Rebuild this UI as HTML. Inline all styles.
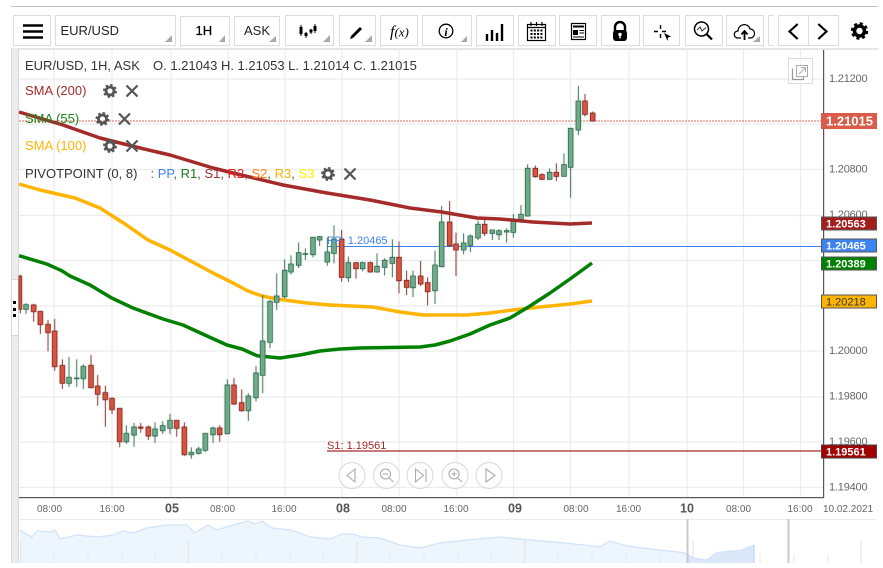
<!DOCTYPE html>
<html><head><meta charset="utf-8"><style>
html,body{margin:0;padding:0;background:#fff;width:883px;height:568px;overflow:hidden}
svg{display:block;font-family:"Liberation Sans",sans-serif}
.btn{fill:#fff;stroke:#dcdcdc;stroke-width:1}
.tri{fill:#a9a9a9}
.ax{font-size:11px;fill:#666;letter-spacing:-.2px}
.t{font-size:10px;fill:#666;text-anchor:middle}
.d{font-size:12.500px;font-weight:bold;fill:#555;text-anchor:middle}
.lg{font-size:13px}
.tag{font-size:11px;font-weight:bold;fill:#fff}
.gw{fill:none;stroke:#2b6d4a;stroke-width:2.600}
.rw{fill:none;stroke:#84261e;stroke-width:2.600}
.gb{fill:#6fab8a;stroke:#2b6d4a;stroke-width:2.400}
.rb{fill:#d9543f;stroke:#84261e;stroke-width:2.400}
.ma{fill:none;stroke-width:3.500;stroke-linejoin:round;stroke-linecap:butt}
</style></head><body>
<svg width="883" height="568" viewBox="0 0 883 568" xmlns="http://www.w3.org/2000/svg">
<defs>
<g id="gear" fill="none" stroke="#555"><circle r="4" stroke-width="2.800"/><circle r="6" stroke-width="2" stroke-dasharray="2.400 2.310"/></g>
<g id="x" fill="none" stroke="#555" stroke-width="2.200"><path d="M-5.500-5.500L5.500 5.500M5.500-5.500L-5.500 5.500"/></g>
</defs>

<!-- page frame -->
<rect x="11" y="6" width="867" height="1" fill="#c4c4c4"/>
<rect x="11" y="48" width="867" height="2" fill="#e6e6e6"/>
<rect x="11" y="49" width="8" height="514" fill="#ececec"/>
<rect x="11" y="49" width="1" height="514" fill="#d8d8d8"/>
<rect x="18" y="49" width="1" height="514" fill="#d8d8d8"/>
<rect x="12" y="279" width="6" height="56" fill="#fff"/>
<rect x="11" y="279" width="8" height="1" fill="#d8d8d8"/><rect x="11" y="335" width="8" height="1" fill="#d8d8d8"/>
<rect x="13" y="301" width="3" height="3" fill="#000"/><rect x="13" y="308" width="3" height="3" fill="#000"/><rect x="13" y="314" width="3" height="3" fill="#000"/>

<!-- toolbar -->
<rect class="btn" x="13.500" y="15.500" width="37" height="30"/>
<rect class="btn" x="55.500" y="15.500" width="120" height="30"/>
<rect class="btn" x="180.500" y="16.500" width="49" height="29"/>
<rect class="btn" x="234.500" y="16.500" width="45" height="29"/>
<rect class="btn" x="285.500" y="15.500" width="48" height="30"/>
<rect class="btn" x="339.500" y="15.500" width="36" height="30"/>
<rect class="btn" x="380.500" y="15.500" width="37" height="30"/>
<rect class="btn" x="422.500" y="15.500" width="49" height="30"/>
<rect class="btn" x="476.500" y="15.500" width="37" height="30"/>
<rect class="btn" x="518.500" y="15.500" width="37" height="30"/>
<rect class="btn" x="559.500" y="15.500" width="37" height="30"/>
<rect class="btn" x="601.500" y="15.500" width="38" height="30"/>
<rect class="btn" x="643.500" y="15.500" width="36" height="30"/>
<rect class="btn" x="685.500" y="15.500" width="37" height="30"/>
<rect class="btn" x="726.500" y="15.500" width="37" height="30"/>
<path d="M774 15.500H768.500V45.500H774" fill="none" stroke="#dcdcdc"/>
<rect class="btn" x="778.500" y="15.500" width="30" height="30"/>
<rect class="btn" x="808.500" y="15.500" width="30" height="30"/>
<path class="tri" d="M172 35V42H165zM225 35V42H219zM276 36V42H269zM330 35V42H323zM372 35V42H365zM467 36V42H461zM760 36V42H753z"/>
<path d="M23 25.500H43M23 31.500H43M23 37.500H43" stroke="#000" stroke-width="2.600" fill="none"/>
<text x="60.500" y="35" font-size="13" fill="#222">EUR/USD</text>
<text x="195.500" y="35" font-size="13" fill="#000" stroke="#000" stroke-width=".25">1H</text>
<text x="244" y="35" font-size="13" fill="#222">ASK</text>
<path d="M301 25V36M306 32V38M311 29V34M315 24V33" stroke="#000" stroke-width="1" fill="none"/>
<path d="M299.500 27h3v7h-3zM304.500 33h3v3h-3zM309.500 29.500h3v3h-3zM313.500 26h3v5h-3z" fill="#000"/>
<path d="M352 37L361 28" stroke="#000" stroke-width="3" fill="none"/><path d="M350 39l1-3 2 2z" fill="#000"/>
<text x="390" y="36.500" font-size="16" font-family="Liberation Serif" font-style="italic" fill="#000">f<tspan font-size="13">(x)</tspan></text>
<circle cx="446" cy="31" r="6.800" fill="none" stroke="#000" stroke-width="1.300"/>
<text x="446" y="36" font-size="12" font-family="Liberation Serif" font-style="italic" font-weight="bold" text-anchor="middle" fill="#000">i</text>
<path d="M487 41V34M492 41V30M497 41V33M502 41V24" stroke="#000" stroke-width="2.400" fill="none"/>
<rect x="527.500" y="24.500" width="18" height="16" fill="none" stroke="#000" stroke-width="1.200"/>
<path d="M527 27.500H546M531 22V26M536.500 22V26M542 22V26" stroke="#000" stroke-width="1.200" fill="none"/>
<path d="M530.500 30.500h12M530.500 34h12M530.500 37.500h12" stroke="#000" stroke-width="2" stroke-dasharray="2 1.300" fill="none"/>
<rect x="571.500" y="23.500" width="14" height="16" fill="none" stroke="#000" stroke-width="1.200"/>
<path d="M573 26.500H584" stroke="#000" stroke-width="2"/>
<rect x="573" y="30" width="5" height="5" fill="#000"/>
<path d="M579.500 30.500H584M579.500 33H584M573 37H584" stroke="#000"/>
<path d="M615 31V27a5 5 0 0 1 10 0V31" fill="none" stroke="#000" stroke-width="2.400"/>
<rect x="613" y="30" width="14" height="11" rx="3" fill="#000"/><circle cx="620" cy="34.500" r="1.700" fill="#fff"/><rect x="619.300" y="35" width="1.400" height="3.500" fill="#fff"/>
<path d="M654 31.500H658M662 31.500H666M660.500 25V29M660.500 34V38" stroke="#000" stroke-width="1.400" fill="none"/>
<path d="M664 33L671 36.500 668 37.500 667.500 41z" fill="#000"/>
<circle cx="701.500" cy="29" r="7" fill="none" stroke="#000" stroke-width="1.500"/>
<path d="M706.500 34L712 39.500" stroke="#000" stroke-width="2.200" fill="none"/>
<path d="M697 30L700 27 702 31 706 27.500" stroke="#333" stroke-width="1" fill="none"/>
<path d="M741 38H738C733 38 733 31 738 31C738 24 748 22 750 29C756 29 756 38 750 38H748" fill="none" stroke="#000" stroke-width="1.200"/>
<path d="M744.500 40V32M741.500 34.500L744.500 31 747.500 34.500" fill="none" stroke="#000" stroke-width="1.800"/>
<path d="M797.700 24L789.500 31.500 797.700 39M818.300 24L826.500 31.500 818.300 39" fill="none" stroke="#000" stroke-width="2.200"/>
<g transform="translate(859.500 31)" fill="none" stroke="#000"><circle r="5" stroke-width="3.600"/><circle r="7.300" stroke-width="2.800" stroke-dasharray="3 2.730"/></g>

<!-- grid -->
<g stroke="#ececec" stroke-width="1.200" fill="none">
<path d="M54 50V497M112 50V497M171 50V497M228 50V497M285 50V497M342 50V497M399 50V497M457 50V497M513.500 50V497M570.500 50V497M629 50V497M687 50V497M743.500 50V497M800.500 50V497"/>
<path d="M19 79H823M19 124H823M19 169.500H823M19 215.500H823M19 260.500H823M19 306H823M19 351H823M19 397H823M19 442H823M19 487.500H823"/>
</g>

<!-- price lines -->
<path d="M19 121H823" stroke="#e26a60" stroke-width="1" stroke-dasharray="2 1"/>
<path d="M327 246.500H823" stroke="#3d84f0" stroke-width="1.100"/>
<path d="M327 451H823" stroke="#a52a2a" stroke-width="1.300"/>

<!-- moving averages under candles -->
<path class="ma" stroke="#ffb400" d="M19 184L40 190 75 198 100 208 125 224 148 240 170 250 213 273 233 283 248 291 262 296 277 299 307 303 330 305 373 307 400 312 423 315 467 315 490 313 513 310 540 307 570 304 592 301"/>
<path class="ma" stroke="#008000" d="M19 255.700L46.700 264 61.700 270.700 70 276 90 285 100 291 111.700 298 133 308 163 319 183 325 207 336 227 345 242 349 257 355.700 280 358 300 355 320 351 340 349 360 348 420 347 435 345 450 341 470 334 490 325 510 318 530 306 550 293 570 279 592 263"/>

<!-- candles -->
<g style="filter:drop-shadow(0 0 1px rgba(120,120,120,.3))">
<g transform="matrix(.33333 0 0 .33333 0 240)">
<path class="gw" d="M78 190V222M207 351V441M230 358V441M250 373V447M379 556V612M402 549V620M465 547V609M488 544V582M510 522V582M574 622V656M596 620V644M616 580V636M639 560V609M682 418V583M745 460V543M768 378V484M788 165V460M810 180V325M830 100V210"/>
<path class="rw" d="M61 105V220M101 192V245M121 212V282M144 240V334M164 237V392M187 358V447M273 345V445M293 405V497M316 437V560M336 472V522M359 505V622M422 549V578M445 557V600M530 540V590M553 547V648M659 556V605M702 414V495M725 448V515"/>
<path class="gb" d="M71 194h14V208h-14zM200 412h14V430h-14zM223 414h14V416h-14zM243 379h14V416h-14zM372 580h14V605h-14zM395 561h14V585h-14zM458 567h14V588h-14zM481 557h14V572h-14zM503 541h14V565h-14zM567 637h14V644h-14zM589 627h14V640h-14zM609 580h14V631h-14zM632 564h14V584h-14zM675 435h14V581h-14zM738 468h14V512h-14zM761 399h14V473h-14zM781 303h14V406h-14zM803 184h14V307h-14zM823 168h14V187h-14z"/>
<path class="rb" d="M57 108h8V208h-8zM94 195h14V215h-14zM114 214h14V254h-14zM137 253h14V278h-14zM157 273h14V380h-14zM180 376h14V430h-14zM266 376h14V443h-14zM286 438h14V463h-14zM309 458h14V479h-14zM329 475h14V509h-14zM352 505h14V605h-14zM415 561h14V565h-14zM438 561h14V588h-14zM523 541h14V565h-14zM546 561h14V644h-14zM652 564h14V584h-14zM695 435h14V492h-14zM718 488h14V512h-14z"/>
</g>
<g transform="matrix(.33333 0 0 .33333 260 200)">
<path class="gw" d="M74 178V295M93 166V224M116 127V204M136 145V180M159 112V172M179 108V138M202 112V197M222 76V190M265 170V246M308 185V214M351 160V218M374 175V226M397 118V232M459 212V291M525 152V312M545 18V200M611 100V163M631 103V156M654 62V120M697 90V120M717 88V120M740 85V128M760 42V113"/>
<path class="rw" d="M245 90V245M288 188V236M331 185V218M417 124V280M440 212V285M482 183V258M503 232V316M569 3V140M588 98V228M674 60V108"/>
<path class="gb" d="M67 211h14V290h-14zM86 192h14V216h-14zM109 158h14V196h-14zM129 161h14V163h-14zM152 112h14V164h-14zM172 110h14V120h-14zM195 156h14V186h-14zM215 118h14V160h-14zM258 188h14V233h-14zM301 188h14V206h-14zM344 199h14V216h-14zM367 181h14V202h-14zM390 172h14V190h-14zM452 228h14V263h-14zM518 195h14V272h-14zM538 66h14V200h-14zM604 129h14V150h-14zM624 108h14V136h-14zM647 73h14V114h-14zM690 90h14V100h-14zM710 92h14V104h-14zM733 92h14V96h-14zM753 57h14V97h-14z"/>
<path class="rb" d="M238 118h14V232h-14zM281 188h14V206h-14zM324 188h14V216h-14zM410 172h14V242h-14zM433 241h14V262h-14zM475 228h14V252h-14zM496 248h14V275h-14zM562 66h14V137h-14zM581 132h14V150h-14zM667 73h14V100h-14z"/>
</g>
<g transform="matrix(.33333 0 0 .33333 500 70)">
<path class="gw" d="M63 405V458M83 283V440M149 295V330M192 250V320M212 175V383M235 48V195"/>
<path class="rw" d="M106 287V323M126 310V330M169 280V333M255 72V140M278 125V155"/>
<path class="gb" d="M56 433h14V448h-14zM76 295h14V438h-14zM142 307h14V328h-14zM185 284h14V319h-14zM205 175h14V292h-14zM228 93h14V180h-14z"/>
<path class="rb" d="M99 295h14V320h-14zM119 314h14V328h-14zM162 307h14V319h-14zM248 93h14V133h-14zM271 129h14V153h-14z"/>
</g>
</g>
<path class="ma" stroke="#a52a2a" d="M19 112L63 125 100 138 140 148 170 155 213 168 233 173 283 185 327 193 370 200 410 208 441.700 212 477 218 500 219 533 222 570 224 592 223"/>

<!-- chart labels -->
<text x="327" y="244" font-size="11" fill="#3d84f0">PP: 1.20465</text>
<text x="327" y="449" font-size="11" fill="#a52a2a">S1: 1.19561</text>

<!-- legend -->
<text class="lg" x="25" y="70" fill="#333">EUR/USD, 1H, ASK</text>
<text class="lg" x="153" y="70" fill="#333">O. 1.21043 H. 1.21053 L. 1.21014 C. 1.21015</text>
<text class="lg" x="25" y="95" fill="#a52a2a">SMA (200)</text>
<text class="lg" x="25" y="123" fill="#1c8a1c">SMA (55)</text>
<text class="lg" x="25" y="150" fill="#ffb400">SMA (100)</text>
<text class="lg" x="25" y="178" fill="#333">PIVOTPOINT (0, 8)</text>
<text class="lg" x="150.500" y="178" fill="#555">: <tspan fill="#3d84f0">PP</tspan>, <tspan fill="#1c7a1c">R1</tspan>, <tspan fill="#a52a2a">S1</tspan>, <tspan fill="#ee1c1c">R2</tspan>, <tspan fill="#ff7f0e">S2</tspan>, <tspan fill="#ffb400">R3</tspan>, <tspan fill="#ffee00">S3</tspan></text>
<use href="#gear" x="110" y="91"/><use href="#x" x="132" y="91"/>
<use href="#gear" x="102.500" y="119"/><use href="#x" x="124.500" y="119"/>
<use href="#gear" x="110" y="146"/><use href="#x" x="132" y="146"/>
<use href="#gear" x="328" y="174"/><use href="#x" x="350" y="174"/>

<!-- expand icon -->
<rect x="788.500" y="58.500" width="24" height="25" fill="#fff" fill-opacity=".6" stroke="#dcdcdc"/>
<path d="M792.500 68.500V79.500H803.500V75" fill="none" stroke="#999" stroke-width="1.200"/>
<rect x="796.500" y="65.500" width="11" height="11" fill="#fff" stroke="#aaa"/>
<path d="M799 74L805 68M801 67.500H805.500V72" fill="none" stroke="#aaa"/>

<!-- axes -->
<rect x="823" y="50" width="1.200" height="448" fill="#555"/>
<rect x="19" y="497" width="805" height="1.200" fill="#555"/>
<text class="ax" x="829" y="82">1.21200</text>
<text class="ax" x="829" y="172.500">1.20800</text>
<text class="ax" x="829" y="218">1.20600</text>
<text class="ax" x="829" y="354">1.20000</text>
<text class="ax" x="829" y="399.500">1.19800</text>
<text class="ax" x="829" y="445">1.19600</text>
<text class="ax" x="829" y="490.500">1.19400</text>
<rect x="821" y="113" width="56" height="16" fill="#d95c4b"/>
<text x="826" y="125.500" font-size="13" font-weight="bold" fill="#fff">1.21015</text>
<rect x="821.500" y="217" width="55" height="13" fill="#a31d1d" stroke="#555"/><text class="tag" x="826" y="227.500">1.20563</text>
<rect x="821.500" y="239" width="55" height="13" fill="#3d84f0" stroke="#555"/><text class="tag" x="826" y="249.500">1.20465</text>
<rect x="821.500" y="257" width="55" height="13" fill="#008000" stroke="#555"/><text class="tag" x="826" y="267.500">1.20389</text>
<rect x="821.500" y="295" width="55" height="13" fill="#ffb400" stroke="#555"/><text x="826" y="305.500" font-size="11" fill="#333">1.20218</text>
<rect x="821.500" y="445" width="55" height="13" fill="#a00000" stroke="#444"/><text class="tag" x="826" y="455.500">1.19561</text>

<!-- nav buttons -->
<g fill="#fff" fill-opacity=".7" stroke="#ddd" stroke-width="1.200">
<circle cx="352" cy="475.500" r="13"/><circle cx="386.500" cy="475.500" r="13"/><circle cx="420" cy="475.500" r="13"/><circle cx="455" cy="475.500" r="13"/><circle cx="489" cy="475.500" r="13"/>
</g>
<g fill="none" stroke="#aaa" stroke-width="1.100">
<path d="M355 469V482L347 475.500Z"/>
<circle cx="385.500" cy="474" r="5"/><path d="M389 478L393.500 482M383 474H388"/>
<path d="M415.500 469V482L423.500 475.500ZM426 469V482" />
<circle cx="454" cy="474" r="5"/><path d="M457.500 478L462 482M451.500 474H456.500M454 471.500V476.500"/>
<path d="M486 469V482L495 475.500Z"/>
</g>

<!-- time axis -->
<text class="t" x="49.500" y="512">08:00</text>
<text class="t" x="112" y="512">16:00</text>
<text class="d" x="172" y="512.500">05</text>
<text class="t" x="222.500" y="512">08:00</text>
<text class="t" x="284" y="512">16:00</text>
<text class="d" x="343" y="512.500">08</text>
<text class="t" x="394" y="512">08:00</text>
<text class="t" x="456" y="512">16:00</text>
<text class="d" x="515" y="512.500">09</text>
<text class="t" x="576" y="512">08:00</text>
<text class="t" x="628.500" y="512">16:00</text>
<text class="d" x="687" y="512.500">10</text>
<text class="t" x="738.500" y="512">08:00</text>
<text class="t" x="800" y="512">16:00</text>
<text class="t" x="848" y="512">10.02.2021</text>

<!-- navigator -->
<rect x="19" y="519" width="858" height="1" fill="#ececec"/>
<path fill="#edf5fd" d="M20 530L25 533 32 537 37 531 50 532 55 530 60 539 77 535 97 537 113 535 123 531 133 533 147 528 167 525 187 525 195 533 208 525 217 530 233 525 248 521 255 524 262 521 272 528 290 530 300 533 310 537 330 539 342 534 353 534 362 537 380 538 400 545 420 548 440 543 467 540 500 537 530 540 565 543 600 546.700 610 541 627 546 650 549 683 552.500 693 558 707 560 717 552.500 740 550.500 754 545V563H20Z"/>
<path fill="#dbe8fa" d="M687 553L693 558 707 560 717 552.500 740 550.500 754 545V563H687Z"/>
<path fill="none" stroke="#cfe3fb" stroke-width="1.200" d="M20 530L25 533 32 537 37 531 50 532 55 530 60 539 77 535 97 537 113 535 123 531 133 533 147 528 167 525 187 525 195 533 208 525 217 530 233 525 248 521 255 524 262 521 272 528 290 530 300 533 310 537 330 539 342 534 353 534 362 537 380 538 400 545 420 548 440 543 467 540 500 537 530 540 565 543 600 546.700 610 541 627 546 650 549 683 552.500 693 558 707 560 717 552.500 740 550.500 754 545"/>
<path d="M754 545V563" stroke="#b9d3f6" stroke-width="1.200"/>
<path d="M54 554V563M88 554V563M122 554V563M155 554V563M222 554V563M256 554V563M290 554V563M323 554V563M390 554V563M424 554V563M458 554V563M491 554V563M558 554V563M592 554V563M626 554V563M660 554V563M726 554V563M760 554V563M794 554V563M828 554V563" stroke="#e9e9e9" stroke-width="1"/>
<path d="M20.500 541V563M188.500 541V563M357 541V563M525 541V563M693 541V563M861 541V563" stroke="#e6e6e6" stroke-width="1.200"/>
<rect x="686.500" y="519" width="2" height="44" fill="#c8c8c8"/>
<rect x="787.500" y="519" width="2" height="44" fill="#c8c8c8"/>
</svg>
</body></html>
